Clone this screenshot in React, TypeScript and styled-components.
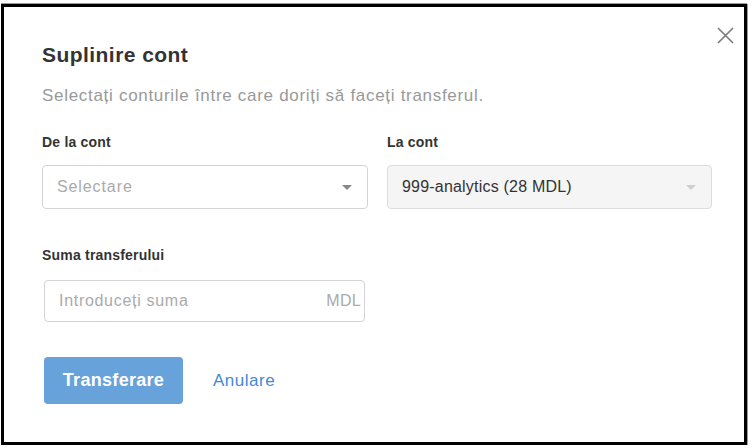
import React from "react";
import styled, { createGlobalStyle } from "styled-components";

const Global = createGlobalStyle`
  html, body { margin: 0; padding: 0; background: #fff; }
  body { font-family: "Liberation Sans", Arial, sans-serif; }
  * { box-sizing: border-box; }
`;

const Page = styled.div`
  width: 753px;
  height: 448px;
  padding: 4px 0 0 1px;
  background: #fff;
`;

const Frame = styled.div`
  position: relative;
  width: 746px;
  height: 441px;
  border: 3px solid #000;
  box-shadow: 0 -1px 0 #9a9a9a, 1px 0 0 #9a9a9a;
  background: #fff;
  padding: 36px 0 0 38px;
  display: flex;
  flex-direction: column;
  color: #333;
`;

const Close = styled.button`
  position: absolute;
  top: 17px;
  right: 8px;
  width: 22px;
  height: 22px;
  padding: 0;
  border: 0;
  background: none;
  display: flex;
  align-items: center;
  justify-content: center;
  cursor: pointer;
`;

const Title = styled.h2`
  margin: 0;
  font-size: 21px;
  line-height: 24px;
  font-weight: 700;
  letter-spacing: 0.45px;
  color: #333;
`;

const Subtitle = styled.p`
  margin: 19px 0 0;
  font-size: 17px;
  line-height: 20px;
  color: #999;
  letter-spacing: 0.7px;
`;

const Row = styled.div`
  display: grid;
  grid-template-columns: 326px 325px;
  column-gap: 19px;
  margin-top: 27px;
`;

const Field = styled.div`
  display: flex;
  flex-direction: column;
`;

const Label = styled.label`
  font-size: 14px;
  line-height: 18px;
  font-weight: 700;
  color: #333;
  letter-spacing: 0.2px;
`;

const SelectBox = styled.div<{ $disabled?: boolean }>`
  margin-top: 14px;
  height: 44px;
  border: 1px solid ${(p) => (p.$disabled ? "#dcdcdc" : "#d4d4d4")};
  border-radius: 4px;
  background: ${(p) => (p.$disabled ? "#f5f5f5" : "#fff")};
  display: flex;
  align-items: center;
  justify-content: space-between;
  padding: 0 15px 0 14px;
`;

const SelectText = styled.span<{ $placeholder?: boolean }>`
  font-size: 16px;
  letter-spacing: ${(p) => (p.$placeholder ? "0.9px" : "0.2px")};
  color: ${(p) => (p.$placeholder ? "#aaa" : "#333")};
`;

const Caret = styled.span<{ $light?: boolean }>`
  width: 0;
  height: 0;
  border-left: 5px solid transparent;
  border-right: 5px solid transparent;
  border-top: 5px solid ${(p) => (p.$light ? "#cfcfcf" : "#888")};
`;

const AmountSection = styled.div`
  display: flex;
  flex-direction: column;
  margin-top: 37px;
`;

const InputBox = styled.div`
  margin: 16px 0 0 2px;
  width: 321px;
  height: 42px;
  border: 1px solid #d4d4d4;
  border-radius: 4px;
  display: flex;
  align-items: center;
  justify-content: space-between;
  padding: 0 3px 0 14px;
`;

const InputPlaceholder = styled.span`
  font-size: 16px;
  letter-spacing: 0.7px;
  color: #aaa;
`;

const Unit = styled.span`
  font-size: 16px;
  letter-spacing: 0.3px;
  color: #aaa;
`;

const Actions = styled.div`
  display: flex;
  align-items: center;
  margin: 35px 0 0 2px;
  gap: 30px;
`;

const PrimaryButton = styled.button`
  width: 139px;
  height: 47px;
  border: 0;
  border-radius: 4px;
  background: #67a3da;
  color: #fff;
  font-family: "Liberation Sans", Arial, sans-serif;
  font-size: 18px;
  font-weight: 700;
  letter-spacing: 0.3px;
  cursor: pointer;
`;

const LinkButton = styled.button`
  border: 0;
  background: none;
  padding: 0;
  color: #3f8ad3;
  font-family: "Liberation Sans", Arial, sans-serif;
  font-size: 17px;
  letter-spacing: 0.5px;
  cursor: pointer;
`;

export default function App() {
  return (
    <Page>
      <Global />
      <Frame>
        <Close aria-label="Închide">
          <svg width="17" height="17" viewBox="0 0 17 17">
            <path d="M1 1 L16 16 M16 1 L1 16" stroke="#7a7a7a" strokeWidth="1.6" fill="none" />
          </svg>
        </Close>
        <Title>Suplinire cont</Title>
        <Subtitle>Selectați conturile între care doriți să faceți transferul.</Subtitle>
        <Row>
          <Field>
            <Label>De la cont</Label>
            <SelectBox>
              <SelectText $placeholder>Selectare</SelectText>
              <Caret />
            </SelectBox>
          </Field>
          <Field>
            <Label>La cont</Label>
            <SelectBox $disabled>
              <SelectText>999-analytics (28 MDL)</SelectText>
              <Caret $light />
            </SelectBox>
          </Field>
        </Row>
        <AmountSection>
          <Label>Suma transferului</Label>
          <InputBox>
            <InputPlaceholder>Introduceți suma</InputPlaceholder>
            <Unit>MDL</Unit>
          </InputBox>
        </AmountSection>
        <Actions>
          <PrimaryButton>Transferare</PrimaryButton>
          <LinkButton>Anulare</LinkButton>
        </Actions>
      </Frame>
    </Page>
  );
}
